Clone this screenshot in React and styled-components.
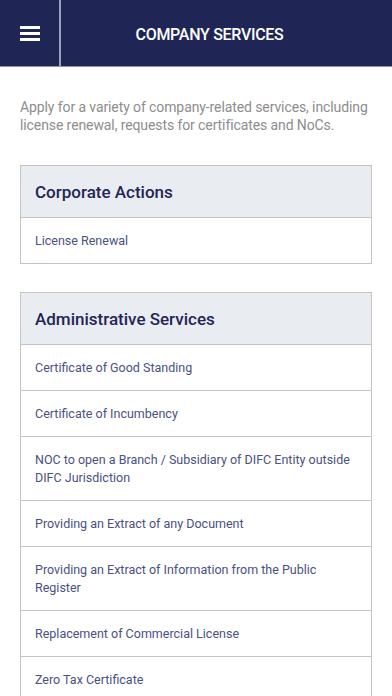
import React from 'react'
import styled, { createGlobalStyle } from 'styled-components'

const GlobalStyle = createGlobalStyle`
  body {
    margin: 0;
    background: #ffffff;
    font-family: Roboto, "Liberation Sans", sans-serif;
  }
`

const sections = [
  {
    title: 'Corporate Actions',
    items: ['License Renewal'],
  },
  {
    title: 'Administrative Services',
    items: [
      'Certificate of Good Standing',
      'Certificate of Incumbency',
      'NOC to open a Branch / Subsidiary of DIFC Entity outside DIFC Jurisdiction',
      'Providing an Extract of any Document',
      'Providing an Extract of Information from the Public Register',
      'Replacement of Commercial License',
      'Zero Tax Certificate',
    ],
  },
]

const App = () => {
  return (
    <Page>
      <GlobalStyle />
      <TopBar>
        <MenuButton aria-label="menu">
          <span />
          <span />
          <span />
        </MenuButton>
        <Title>COMPANY SERVICES</Title>
      </TopBar>

      <Content>
        <Intro>
          Apply for a variety of company-related services, including
          license renewal, requests for certificates and NoCs.
        </Intro>

        {sections.map((s) => (
          <Card key={s.title}>
            <CardHeader>{s.title}</CardHeader>
            {s.items.map((item) => (
              <Row key={item}>{item}</Row>
            ))}
          </Card>
        ))}
      </Content>
    </Page>
  )
}

const Page = styled.div`
  width: 392px;
  height: 696px;
  overflow: hidden;
`

const TopBar = styled.header`
  display: flex;
  align-items: stretch;
  height: 66px;
  background: #1f2656;
  border-bottom: 1px solid #8f94ad;
`

const MenuButton = styled.button`
  box-sizing: border-box;
  width: 61px;
  padding: 0 0 0 20px;
  margin: 0;
  border: none;
  border-right: 2px solid #9ea2b8;
  background: transparent;
  display: flex;
  flex-direction: column;
  justify-content: center;
  gap: 3px;
  span {
    display: block;
    width: 20px;
    height: 3px;
    background: #ffffff;
  }
`

const Title = styled.h1`
  flex: 1;
  margin: 0;
  padding: 3px 34px 0 0;
  display: flex;
  align-items: center;
  justify-content: center;
  color: #ffffff;
  font-size: 16px;
  font-weight: 500;
  letter-spacing: -0.3px;
`

const Content = styled.main`
  padding: 31px 20px 0;
`

const Intro = styled.p`
  margin: 0 0 31px;
  font-size: 14px;
  line-height: 18px;
  color: #8d8d8d;
  letter-spacing: -0.1px;
`

const Card = styled.section`
  border: 1px solid #c4c4c4;
  border-top: none;
  margin-bottom: 28px;
`

const CardHeader = styled.h2`
  margin: 0;
  height: 52px;
  box-sizing: border-box;
  border-top: 1px solid #c4c4c4;
  padding: 0 14px;
  display: flex;
  align-items: center;
  background: #e9ecf0;
  color: #1f2656;
  font-size: 17px;
  font-weight: 500;
`

const Row = styled.div`
  border-top: 1px solid #c4c4c4;
  padding: 14px 14px 13px;
  font-size: 12.5px;
  line-height: 18px;
  color: #4a5182;
`

export default App
